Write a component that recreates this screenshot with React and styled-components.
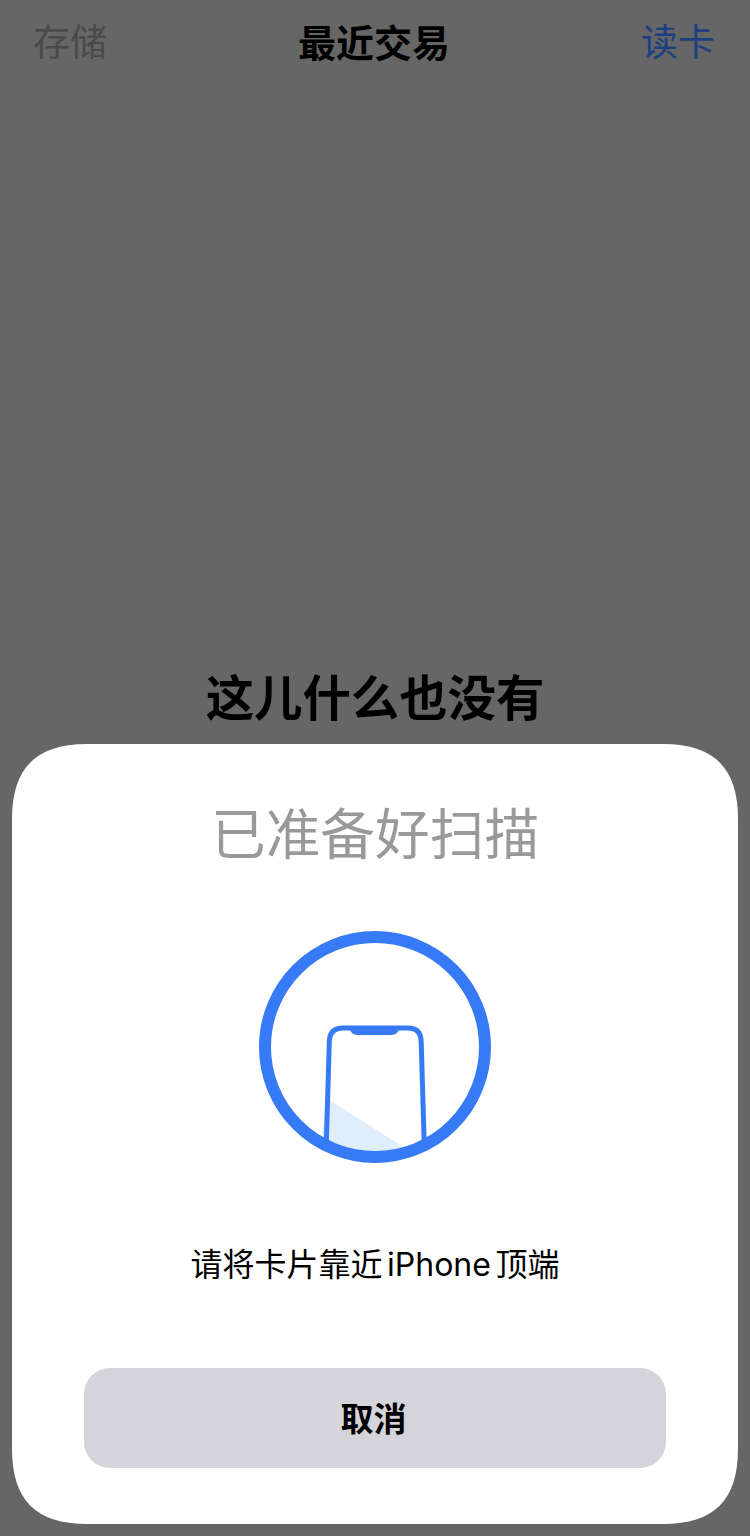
import React from 'react'
import styled, { createGlobalStyle } from 'styled-components'

const Global = createGlobalStyle`
    html, body {
        margin: 0;
        padding: 0;
        background: #666666;
    }
`

const Page = styled.div`
    position: relative;
    width: 750px;
    height: 1536px;
    overflow: hidden;
    background: #666666;
    font-family: Inter, "Noto Sans CJK SC", sans-serif;
`

const NavBar = styled.div`
    display: flex;
    align-items: center;
    justify-content: space-between;
    height: 44px;
    padding: 21px 35px 1px 33px;
`

const NavButton = styled.div`
    width: 110px;
    font-size: 37px;
    line-height: 44px;
    text-align: ${props => props.$right ? 'right' : 'left'};
    color: ${props => props.$color};
`

const NavTitle = styled.div`
    font-size: 38px;
    line-height: 42px;
    font-weight: 700;
    color: #000;
`

const EmptyTitle = styled.div`
    margin-top: 603px;
    font-size: 48.4px;
    line-height: 60px;
    font-weight: 700;
    text-align: center;
    color: #000;
`

// the sheet has continuous (squircle) corners, a border-radius is too round
const Sheet = styled.div`
    position: absolute;
    left: 12px;
    top: 744px;
    width: 726px;
    height: 780px;
    display: flex;
    flex-direction: column;
    align-items: center;
    background: #fff;
    clip-path: path("M0 75 C0 24 24 0 75 0 L651 0 C702 0 726 24 726 75 L726 705 C726 756 702 780 651 780 L75 780 C24 780 0 756 0 705 Z");
`

const SheetTitle = styled.div`
    margin-top: 57px;
    font-size: 54.7px;
    line-height: 66px;
    font-weight: 400;
    color: #999999;
`

const Scan = styled.svg`
    display: block;
    margin-top: 63px;
`

const Message = styled.div`
    margin-top: 79px;
    font-size: 32px;
    line-height: 44px;
    word-spacing: -4.5px;
    color: #000;
`

const CancelButton = styled.button`
    margin-top: 81px;
    width: 582px;
    height: 100px;
    padding: 0 3px 3px 0;
    border: 0;
    border-radius: 26px;
    background: #d5d4da;
    font-family: inherit;
    font-size: 33px;
    font-weight: 700;
    color: #000;
`

function PhoneCircle() {
    return (
        <Scan width="234" height="234" viewBox="0 0 234 234">
            <defs>
                <clipPath id="inside">
                    <circle cx="117" cy="117" r="112" />
                </clipPath>
            </defs>
            <g clipPath="url(#inside)">
                <path d="M70 169 L150 220 L60 225 Z" fill="#e0edfb" />
                <path
                    d="M67.5 240 L71.3 112 Q71.5 98 85 98 L150 98 Q163 98 163.2 112 L167 240"
                    fill="none"
                    stroke="#367bf5"
                    strokeWidth="5"
                />
                <path d="M92 97 L141 97 Q141 105 133 105 L100 105 Q92 105 92 97 Z" fill="#367bf5" />
            </g>
            <circle cx="117" cy="117" r="110" fill="none" stroke="#367bf5" strokeWidth="12" />
        </Scan>
    )
}

export default function App() {
    return (
        <Page>
            <Global />
            <NavBar>
                <NavButton $color="#4a4a4a">存储</NavButton>
                <NavTitle>最近交易</NavTitle>
                <NavButton $right $color="#1b3f7f">读卡</NavButton>
            </NavBar>
            <EmptyTitle>这儿什么也没有</EmptyTitle>
            <Sheet>
                <SheetTitle>已准备好扫描</SheetTitle>
                <PhoneCircle />
                <Message>请将卡片靠近 iPhone 顶端</Message>
                <CancelButton>取消</CancelButton>
            </Sheet>
        </Page>
    )
}
